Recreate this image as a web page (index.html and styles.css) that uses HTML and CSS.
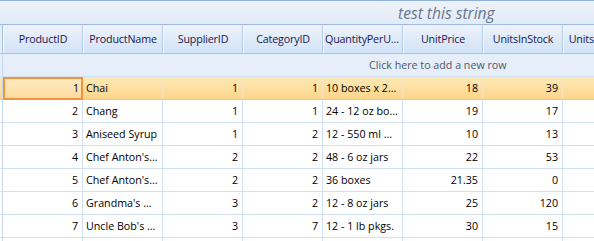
FILE: index.html
```html
<!DOCTYPE html>
<html>
<head>
<meta charset="utf-8">
<link rel="stylesheet" href="styles.css">
</head>
<body>
<div class="grid">
  <div class="title"><span>test this string</span></div>
  <div class="row header">
    <div class="ind"></div>
    <div class="cell">ProductID</div>
    <div class="cell">ProductName</div>
    <div class="cell">SupplierID</div>
    <div class="cell">CategoryID</div>
    <div class="cell">QuantityPerUnit</div>
    <div class="cell">UnitPrice</div>
    <div class="cell">UnitsInStock</div>
    <div class="cell">UnitsOnOrder</div>
  </div>
  <div class="row newrow">
    <div class="ind"></div>
    <div class="newtext">Click here to add a new row</div>
  </div>
  <div class="row data selected">
    <div class="ind"></div>
    <div class="cell num current">1</div>
    <div class="cell">Chai</div>
    <div class="cell num">1</div>
    <div class="cell num">1</div>
    <div class="cell">10 boxes x 20 bags</div>
    <div class="cell num">18</div>
    <div class="cell num">39</div>
    <div class="cell num">0</div>
  </div>
  <div class="row data">
    <div class="ind"></div>
    <div class="cell num">2</div>
    <div class="cell">Chang</div>
    <div class="cell num">1</div>
    <div class="cell num">1</div>
    <div class="cell">24 - 12 oz bottles</div>
    <div class="cell num">19</div>
    <div class="cell num">17</div>
    <div class="cell num">40</div>
  </div>
  <div class="row data">
    <div class="ind"></div>
    <div class="cell num">3</div>
    <div class="cell">Aniseed Syrup</div>
    <div class="cell num">1</div>
    <div class="cell num">2</div>
    <div class="cell">12 - 550 ml bottles</div>
    <div class="cell num">10</div>
    <div class="cell num">13</div>
    <div class="cell num">70</div>
  </div>
  <div class="row data">
    <div class="ind"></div>
    <div class="cell num">4</div>
    <div class="cell">Chef Anton's Cajun Seasoning</div>
    <div class="cell num">2</div>
    <div class="cell num">2</div>
    <div class="cell">48 - 6 oz jars</div>
    <div class="cell num">22</div>
    <div class="cell num">53</div>
    <div class="cell num">0</div>
  </div>
  <div class="row data">
    <div class="ind"></div>
    <div class="cell num">5</div>
    <div class="cell">Chef Anton's Gumbo Mix</div>
    <div class="cell num">2</div>
    <div class="cell num">2</div>
    <div class="cell">36 boxes</div>
    <div class="cell num">21.35</div>
    <div class="cell num">0</div>
    <div class="cell num">0</div>
  </div>
  <div class="row data">
    <div class="ind"></div>
    <div class="cell num">6</div>
    <div class="cell">Grandma's Boysenberry Spread</div>
    <div class="cell num">3</div>
    <div class="cell num">2</div>
    <div class="cell">12 - 8 oz jars</div>
    <div class="cell num">25</div>
    <div class="cell num">120</div>
    <div class="cell num">0</div>
  </div>
  <div class="row data">
    <div class="ind"></div>
    <div class="cell num">7</div>
    <div class="cell">Uncle Bob's Organic Dried Pears</div>
    <div class="cell num">3</div>
    <div class="cell num">7</div>
    <div class="cell">12 - 1 lb pkgs.</div>
    <div class="cell num">30</div>
    <div class="cell num">15</div>
    <div class="cell num">0</div>
  </div>
  <div class="row data">
    <div class="ind"></div>
    <div class="cell num">8</div>
    <div class="cell">Northwoods Cranberry Sauce</div>
    <div class="cell num">3</div>
    <div class="cell num">2</div>
    <div class="cell">12 - 12 oz jars</div>
    <div class="cell num">40</div>
    <div class="cell num">6</div>
    <div class="cell num">0</div>
  </div>
</div>
</body>
</html>
```
FILE: styles.css
```css
html, body {
  margin: 0;
  padding: 0;
  background: #ffffff;
}
.grid {
  width: 594px;
  height: 241px;
  overflow: hidden;
  border-top: 1px solid #8eb0dc;
  box-sizing: border-box;
  font-family: "Open Sans", "Noto Sans", sans-serif;
  font-size: 10.7px;
  background: #ffffff;
}
.title {
  height: 23px;
  background: linear-gradient(#eef3fb, #e1eaf7);
  display: flex;
  align-items: center;
  padding-left: 398px;
  font-style: italic;
  font-size: 15.6px;
  color: #69768a;
  white-space: nowrap;
}
.row {
  display: flex;
  width: 900px;
  box-sizing: border-box;
}
.ind {
  width: 2px;
  flex: none;
  border-right: 1px solid #c6d8f0;
}
.cell {
  width: 80px;
  flex: none;
  box-sizing: border-box;
  border-right: 1px solid #d2e0f4;
  padding: 0 4px;
  white-space: nowrap;
  overflow: hidden;
  text-overflow: ellipsis;
}
.header {
  height: 30px;
  border-top: 1px solid #9cb9e1;
  border-bottom: 1px solid #a9c3e6;
  background: linear-gradient(#edf3fc, #dde9f8 60%, #d2e2f7);
}
.header .ind {
  border-right: 1px solid #a6c0e3;
  background: #e6eefa;
}
.header .cell {
  text-align: center;
  line-height: 28px;
  padding: 0 1px 0 2px;
  letter-spacing: -0.15px;
  color: #1a164f;
  border-right: 1px solid #b4cbea;
  box-shadow: inset 1px 0 0 #f7faff;
}
.newrow {
  height: 23px;
  background: #e6eef9;
  border-bottom: 1px solid #d3e1f4;
}
.newtext {
  padding-left: 366px;
  line-height: 22px;
  color: #4d5868;
  white-space: nowrap;
}
.data {
  height: 23px;
  border-bottom: 1px solid #d2e0f4;
  color: #000000;
}
.data .cell {
  line-height: 22px;
  padding-left: 3px;
}
.data .cell.num {
  text-align: right;
}
.selected {
  background: linear-gradient(#fde9b6, #fddf9e 55%, #fdd48a);
  border-bottom: 1px solid #f8c671;
}
.selected .cell {
  border-right-color: #f4e4bd;
}
.selected .cell.current {
  height: 23px;
  margin-bottom: -1px;
  border: 2px solid #f7923c;
  line-height: 19px;
  padding-right: 2px;
  background: linear-gradient(#fdeabf, #fddca0);
}
```
